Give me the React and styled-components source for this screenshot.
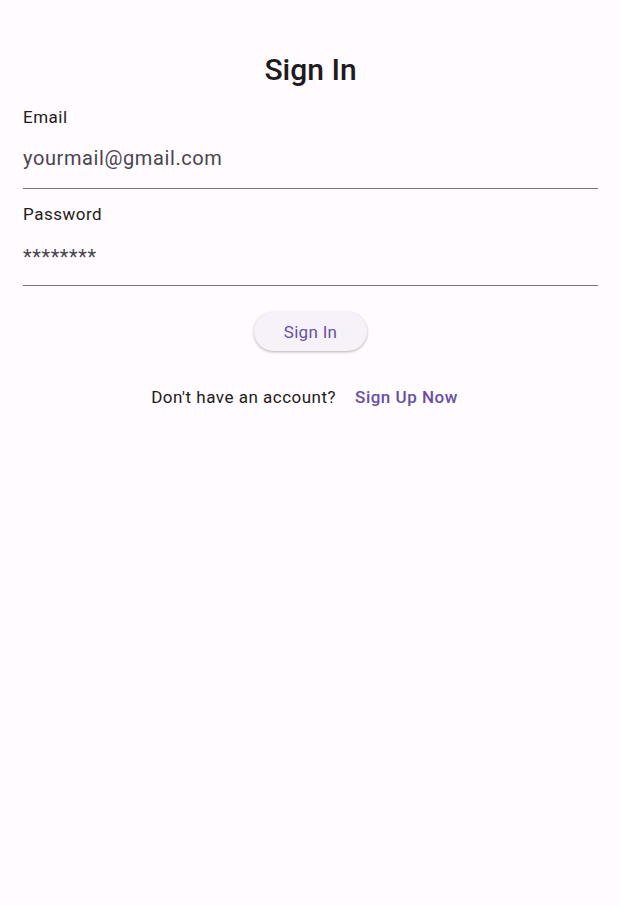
import React from "react";
import styled, { createGlobalStyle } from "styled-components";

const GlobalStyle = createGlobalStyle`
  html, body {
    margin: 0;
    padding: 0;
    background: #fffbfe;
    font-family: Roboto, "Liberation Sans", sans-serif;
    color: #1d1b20;
  }
`;

const Page = styled.div`
  min-height: 906px;
  padding: 52px 22px 0 23px;
  box-sizing: border-box;
  display: flex;
  flex-direction: column;
`;

const Title = styled.h1`
  margin: 0 0 18px;
  text-align: center;
  font-size: 30px;
  font-weight: 500;
  line-height: 36px;
`;

const Field = styled.label`
  display: flex;
  flex-direction: column;
  border-bottom: 1px solid #79747e;
  margin-bottom: 14px;
`;

const Label = styled.span`
  font-size: 17px;
  line-height: 22px;
  color: #1d1b20;
  letter-spacing: 0.5px;
`;

const Input = styled.input`
  border: none;
  outline: none;
  background: transparent;
  padding: 0;
  margin: ${({ $secret }) => ($secret ? "15px 0 11px" : "13px 0 13px")};
  height: 34px;
  font-family: Roboto, "Liberation Sans", sans-serif;
  font-size: 20px;
  letter-spacing: 0.6px;
  color: #49454f;
  &::placeholder {
    color: #49454f;
  }
`;

const Actions = styled.div`
  display: flex;
  flex-direction: column;
  align-items: center;
  gap: 36px;
  margin-top: 12px;
`;

const Button = styled.button`
  width: 113px;
  height: 39px;
  border: none;
  border-radius: 20px;
  background: #f7f2fa;
  color: #6750a4;
  font-family: Roboto, "Liberation Sans", sans-serif;
  font-size: 17px;
  letter-spacing: 0.3px;
  box-shadow: 0 1px 3px rgba(0, 0, 0, 0.3);
  cursor: pointer;
`;

const Footer = styled.div`
  display: flex;
  align-items: center;
  gap: 7px;
  font-size: 17px;
  letter-spacing: 0.5px;
`;

const Link = styled.a`
  padding: 0 12px;
  color: #6750a4;
  font-weight: 500;
  text-decoration: none;
  cursor: pointer;
`;

export default function App() {
  return (
    <>
      <GlobalStyle />
      <Page>
        <Title>Sign In</Title>
        <Field>
          <Label>Email</Label>
          <Input placeholder="yourmail@gmail.com" />
        </Field>
        <Field>
          <Label>Password</Label>
          <Input $secret type="text" placeholder="********" />
        </Field>
        <Actions>
          <Button>Sign In</Button>
          <Footer>
            <span>Don't have an account?</span>
            <Link>Sign Up Now</Link>
          </Footer>
        </Actions>
      </Page>
    </>
  );
}
